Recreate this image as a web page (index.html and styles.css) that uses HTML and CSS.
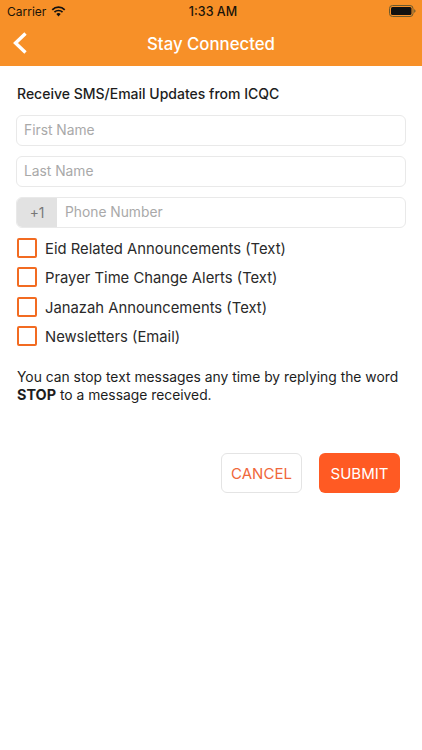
FILE: index.html
```html
<!DOCTYPE html>
<html lang="en">
<head>
<meta charset="utf-8">
<title>Stay Connected</title>
<link rel="stylesheet" href="styles.css">
</head>
<body>
<header class="top">
  <div class="status">
    <div class="status-left">
      <span>Carrier</span>
      <svg class="wifi" viewBox="0 0 16 12" width="15" height="11"><path d="M8 11.5 5.6 8.8a3.4 3.4 0 0 1 4.8 0L8 11.5Z" fill="#111"/><path d="M3.6 6.7a6.3 6.3 0 0 1 8.8 0M1.2 4.1a9.7 9.7 0 0 1 13.6 0" fill="none" stroke="#111" stroke-width="1.9"/></svg>
    </div>
    <span class="clock">1:33 AM</span>
    <svg class="battery" viewBox="0 0 27 12" width="27" height="12"><rect x=".5" y=".5" width="23.5" height="11" rx="3" fill="none" stroke="#6b5a2e" stroke-width="1"/><rect x="2" y="2" width="20.5" height="8" rx="1.5" fill="#111"/><path d="M25.2 4.2c.9.3 1.3 1 1.3 1.8s-.4 1.5-1.3 1.8Z" fill="#6b5a2e"/></svg>
  </div>
  <div class="nav">
    <svg class="back" viewBox="0 0 16 24" width="16" height="24"><path d="M13.5 2.5 3.5 12l10 9.500" fill="none" stroke="#fff" stroke-width="3.400"/></svg>
    <h1>Stay Connected</h1>
  </div>
</header>
<main class="content">
  <h2>Receive SMS/Email Updates from ICQC</h2>
  <div class="field"><span class="ph">First Name</span></div>
  <div class="field"><span class="ph">Last Name</span></div>
  <div class="field phone"><span class="prefix">+1</span><span class="ph">Phone Number</span></div>
  <ul class="checks">
    <li><span class="box"></span><span class="label">Eid Related Announcements (Text)</span></li>
    <li><span class="box"></span><span class="label">Prayer Time Change Alerts (Text)</span></li>
    <li><span class="box"></span><span class="label">Janazah Announcements (Text)</span></li>
    <li><span class="box"></span><span class="label">Newsletters (Email)</span></li>
  </ul>
  <p class="note">You can stop text messages any time by replying the word <strong>STOP</strong> to a message received.</p>
  <div class="actions">
    <button class="btn cancel">CANCEL</button>
    <button class="btn submit">SUBMIT</button>
  </div>
</main>
</body>
</html>
```
FILE: styles.css
```css
* { box-sizing: border-box; }
html, body { margin: 0; padding: 0; }
body {
  width: 422px;
  height: 750px;
  background: #fff;
  font-family: Inter, "Liberation Sans", sans-serif;
  color: #222;
  overflow: hidden;
}
.top { background: #f79028; height: 66px; }
.status {
  height: 22px;
  padding: 0 7px;
  display: grid;
  grid-template-columns: 1fr auto 1fr;
  align-items: center;
  font-size: 12px;
  color: #1a1408;
}
.status-left { display: flex; align-items: center; gap: 5px; }
.clock { font-weight: 500; font-size: 12.5px; margin-left: 4px; }
.battery { justify-self: end; margin-right: -1px; }
.nav {
  height: 44px;
  padding-bottom: 1px;
  display: flex;
  align-items: center;
  justify-content: center;
  position: relative;
}
.back { position: absolute; left: 12px; top: 9px; }
.nav h1 { margin: 0; font-size: 16.800px; font-weight: 500; color: #fff; }
.content { padding: 19px 16px 0; }
h2 { margin: 0 0 13px 1px; font-size: 14px; line-height: 17px; font-weight: 500; color: #1d1d1d; }
.field {
  height: 31px;
  margin-bottom: 10px;
  border: 1px solid #e9e9e9;
  border-radius: 6px;
  display: flex;
  align-items: center;
  padding-left: 7px;
  font-size: 13.800px;
}
.ph { color: #a9a9a9; margin-bottom: 2px; }
.phone { padding-left: 0; overflow: hidden; margin-bottom: 10px; }
.prefix {
  width: 40px;
  height: 100%;
  background: #e2e2e2;
  color: #777;
  display: flex;
  align-items: center;
  justify-content: center;
  margin-right: 8px;
}
.checks { list-style: none; margin: 0; padding: 0; display: flex; flex-direction: column; gap: 9.300px; }
.checks li { display: flex; align-items: center; height: 20px; font-size: 14.800px; color: #2a2a2a; }
.label { margin-top: 2px; }
.box {
  width: 20px;
  height: 20px;
  border: 2.500px solid #f26b21;
  border-radius: 2px;
  margin: 0 8px 0 1px;
}
.note { margin: 23.500px 0 0 1px; font-size: 13.850px; line-height: 17px; color: #1d1d1d; }
.note strong { font-weight: 700; font-size: 14.400px; }
.actions { display: flex; justify-content: flex-end; gap: 17px; margin-top: 49px; padding-right: 6px; }
.btn {
  width: 81px;
  height: 40px;
  border-radius: 6px;
  font-family: inherit;
  font-size: 15px;
  padding: 0;
}
.cancel { background: #fff; border: 1px solid #e4e4e4; color: #f0673a; }
.submit { background: #ff5a23; border: 0; color: #fff; }
```
